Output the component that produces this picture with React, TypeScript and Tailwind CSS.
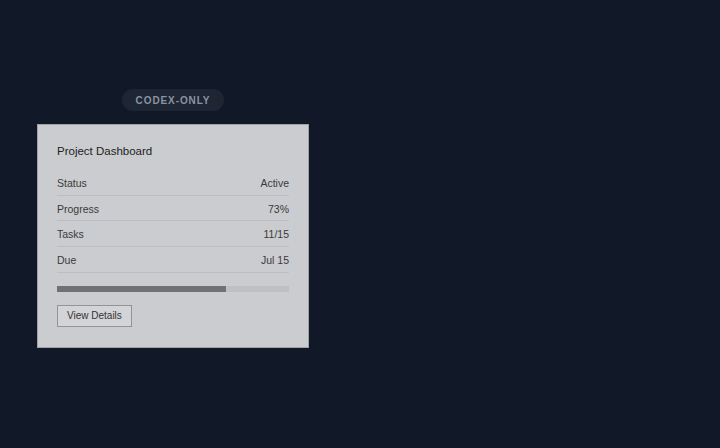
import React from 'react';

const rows = [
  { label: 'Status', value: 'Active' },
  { label: 'Progress', value: '73%' },
  { label: 'Tasks', value: '11/15' },
  { label: 'Due', value: 'Jul 15' },
];

function App() {
  const progress = 73;

  return (
    <div
      className="min-h-screen w-full bg-[#111827] pl-[37px] pt-[89px]"
      style={{ fontFamily: '"Liberation Sans", Arial, sans-serif' }}
    >
      <div className="flex w-[272px] flex-col items-center gap-[13px]">
        <span className="flex h-[22px] items-center rounded-full bg-[#1e2533] px-[14px] pt-[1px] text-[10px] font-bold tracking-[0.9px] text-[#8a93a2]">
          CODEX-ONLY
        </span>

        <div className="w-full border border-[#9fa1a5] bg-[#cbccd0] px-[19px] pb-[20px] pt-[19px] text-[#333]">
          <h2 className="mb-[12px] text-[11.5px] leading-[14px] text-[#222]">Project Dashboard</h2>

          <div>
            {rows.map((row) => (
              <div
                key={row.label}
                className="flex justify-between border-b border-[#bdbec2] pb-[5.7px] pt-[8px] text-[10.5px] leading-[11px] text-[#3a3a3a]"
              >
                <span>{row.label}</span>
                <span>{row.value}</span>
              </div>
            ))}
          </div>

          <div className="mt-[13px] h-[6px] w-full bg-[#bfc0c4]">
            <div className="h-full bg-[#707174]" style={{ width: `${progress}%` }} />
          </div>

          <button className="mt-[13px] h-[22px] border border-[#929498] bg-[#d3d4d8] px-[9px] text-[10px] text-[#333]">
            View Details
          </button>
        </div>
      </div>
    </div>
  );
}

export default App;
